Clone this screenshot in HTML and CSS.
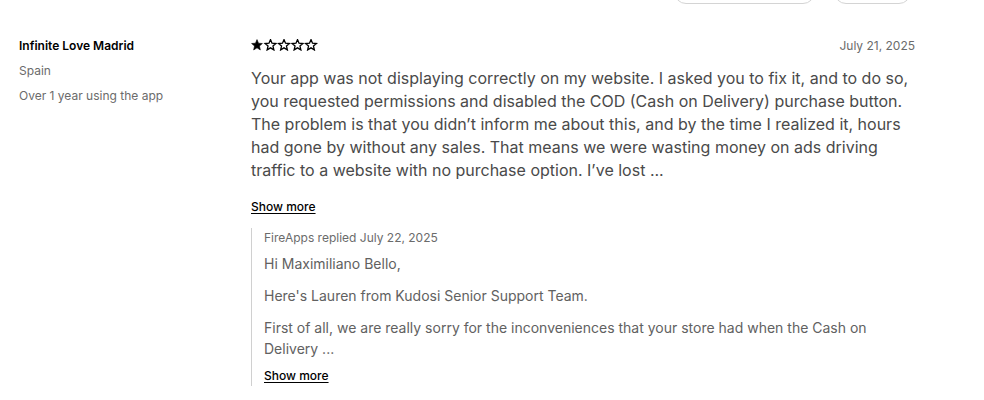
FILE: index.html
```html
<!DOCTYPE html>
<html>
<head>
<meta charset="utf-8">
<link rel="stylesheet" href="styles.css">
</head>
<body>
<div class="page">
  <div class="toolbar">
    <button class="pill pill-wide"></button>
    <button class="pill pill-narrow"></button>
  </div>
  <div class="review">
    <div class="meta">
      <div class="name">Infinite Love Madrid</div>
      <div class="sub">Spain</div>
      <div class="sub">Over 1 year using the app</div>
    </div>
    <div class="body">
      <div class="head">
        <div class="stars">
          <svg width="68" height="12" viewBox="0 0 68 12">
            <defs>
              <path id="st" d="M6 0.6 L7.5 4.2 L11.4 4.5 L8.45 7 L9.35 10.9 L6 8.85 L2.65 10.9 L3.55 7 L0.6 4.5 L4.5 4.2 Z"/>
            </defs>
            <use href="#st" x="0" y="0" fill="#000" stroke="#000" stroke-width="0.6"/>
            <use href="#st" x="13.5" y="0" fill="none" stroke="#000" stroke-width="1.3"/>
            <use href="#st" x="27" y="0" fill="none" stroke="#000" stroke-width="1.3"/>
            <use href="#st" x="40.5" y="0" fill="none" stroke="#000" stroke-width="1.3"/>
            <use href="#st" x="54" y="0" fill="none" stroke="#000" stroke-width="1.3"/>
          </svg>
        </div>
        <div class="date">July 21, 2025</div>
      </div>
      <p class="text">Your app was not displaying correctly on my website. I asked you to fix it, and to do so, you requested permissions and disabled the COD (Cash on Delivery) purchase button. The problem is that you didn’t inform me about this, and by the time I realized it, hours had gone by without any sales. That means we were wasting money on ads driving traffic to a website with no purchase option. I’ve lost ...</p>
      <a class="more" href="#">Show more</a>
      <div class="reply">
        <div class="reply-head">FireApps replied July 22, 2025</div>
        <p class="rp first">Hi Maximiliano Bello,</p>
        <p class="rp">Here's Lauren from Kudosi Senior Support Team.</p>
        <p class="rp">First of all, we are really sorry for the inconveniences that your store had when the Cash on Delivery ...</p>
        <a class="more" href="#">Show more</a>
      </div>
    </div>
  </div>
</div>
</body>
</html>
```

FILE: styles.css
```css
* { box-sizing: border-box; }
html, body { margin: 0; padding: 0; background: #fff; }
body { font-family: Inter, "Noto Sans", sans-serif; color: #303030; }
.page { width: 984px; height: 400px; overflow: hidden; padding: 0 0 0 19px; }
.toolbar { display: flex; justify-content: flex-end; gap: 19px; margin-top: -28px; padding-right: 73px; height: 32px; }
.pill { height: 32px; border: 1px solid #d4d4d4; border-radius: 12px; background: #fff; }
.pill-wide { width: 141px; }
.pill-narrow { width: 77px; }
.review { display: grid; grid-template-columns: 232px 664px; margin-top: 34px; }
.meta { display: flex; flex-direction: column; gap: 9px; }
.name { font-size: 12px; line-height: 16px; font-weight: 600; color: #000; }
.sub { font-size: 12px; line-height: 16px; color: #6b6b6b; }
.head { display: flex; justify-content: space-between; align-items: center; height: 16px; }
.stars { display: flex; height: 12px; margin-top: -2px; }
.stars svg { display: block; }
.date { font-size: 12px; line-height: 16px; color: #6b6b6b; }
.text { margin: 13px 0 0; font-size: 16px; line-height: 23px; color: #4a4a4a; }
.more { display: inline-block; margin-top: 17px; font-size: 12px; line-height: 16px; font-weight: 500; color: #000; text-decoration: underline; text-decoration-color: #000; text-underline-offset: 2px; }
.reply { margin-top: 13px; border-left: 1px solid #d0d0d0; padding: 2px 0 2px 12px; width: 640px; }
.reply-head { font-size: 12px; line-height: 16px; color: #6b6b6b; }
.rp { margin: 11px 0 0; font-size: 14px; line-height: 21px; color: #616161; }
.rp.first { margin-top: 7px; }
.reply .more { margin-top: 9px; }
```
